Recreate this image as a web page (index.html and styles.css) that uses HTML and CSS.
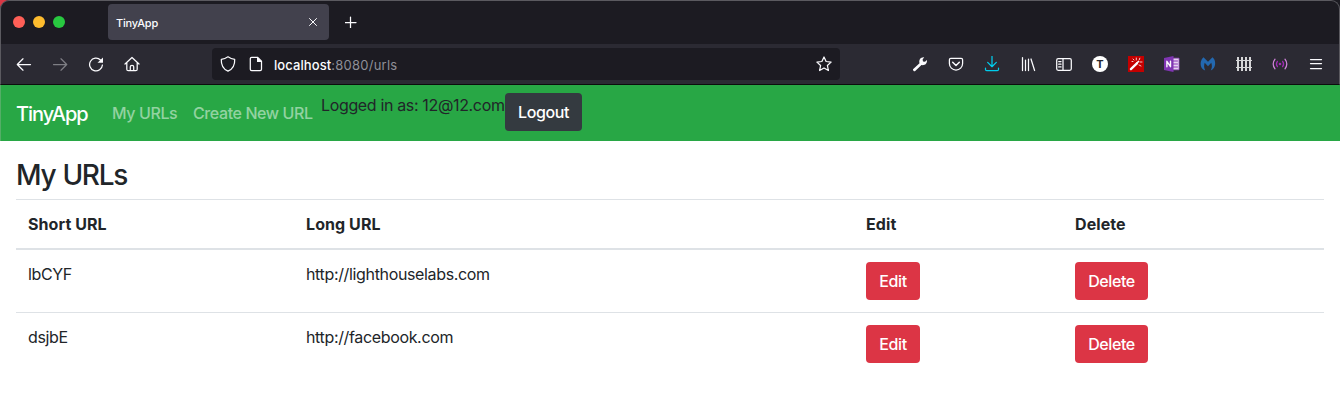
FILE: index.html
```html
<!DOCTYPE html>
<html lang="en">
<head>
<meta charset="utf-8">
<title>TinyApp</title>
<link rel="stylesheet" href="styles.css">
</head>
<body>
<div class="browser">
  <div class="tabstrip">
    <div class="lights"><i class="close"></i><i class="min"></i><i class="max"></i></div>
    <div class="tab"><span class="tab-title">TinyApp</span>
      <svg width="8" height="8" viewBox="0 0 8 8"><path d="M.5.5l7 7M7.5.5l-7 7"/></svg>
    </div>
    <svg class="newtab" width="12" height="12" viewBox="0 0 12 12"><path d="M5.500 1v11M0 6.500h11"/></svg>
  </div>
  <div class="toolbar">
    <div class="navicons">
      <svg viewBox="0 0 16 16"><path d="M14.500 8.500H1.500M7 2.800L1.300 8.500 7 14.200"/></svg>
      <svg class="dim" viewBox="0 0 16 16"><path d="M1.500 8.500h13M9 2.800l5.700 5.700L9 14.200"/></svg>
      <svg viewBox="0 0 16 16"><path d="M12.500 4A6.400 6.400 0 1 0 14.400 9"/><path class="fill" d="M15 1.500v5.300H9.500z"/></svg>
      <svg viewBox="0 0 16 16"><path d="M1 8l7-6.500L15 8M2.800 6.600v6.600q0 1.500 1.500 1.500h7.400q1.500 0 1.500-1.500V6.600M6.300 14.500v-3.800q0-1.300 1.700-1.300t1.700 1.300v3.800"/></svg>
    </div>
    <div class="urlbar">
      <svg viewBox="0 0 16 16"><path d="M8 .8Q5 3 1.300 3.400C1 9.300 3.500 13.300 8 15.200 12.500 13.300 15 9.300 14.700 3.400Q11 3 8 .8z"/></svg>
      <svg class="page" viewBox="0 0 16 16"><path d="M3.700 1.300h5.800l4 4v8q0 1.400-1.400 1.400H3.700q-1.400 0-1.400-1.400V2.700q0-1.400 1.400-1.400z"/><path class="fill" d="M9 1l5 5H9z"/></svg>
      <span class="address"><b>localhost</b>:8080/urls</span>
      <svg class="star" viewBox="0 0 16 16"><path d="M8 1l2.100 4.500 5 .6-3.700 3.400 1 5L8 12l-4.400 2.500 1-5L.9 6.100l5-.6z"/></svg>
    </div>
    <div class="extensions">
      <svg viewBox="0 0 16 16"><path class="fill" d="M1 13.300L7.500 7.300C6.600 4 8.500 1 12.200 1.300L10.600 3.500 11 5.500l2 .3L14.900 4C15.500 7.500 12.700 9.800 9.500 9.100L3.200 15q-.8.6-1.600-.1t-.6-1.600z"/></svg>
      <svg viewBox="0 0 16 16"><path d="M2.800 2.300h10.400q1.400 0 1.400 1.400V7.500a6.600 6.600 0 0 1-13.200 0V3.700q0-1.400 1.400-1.400z"/><path d="M4.700 6.300L8 9.500l3.300-3.200" stroke-width="1.500"/></svg>
      <svg class="download" viewBox="0 0 16 16"><path d="M8 .3v10.200M3.700 6.400L8 10.700l4.300-4.300M1.500 12v1.500q0 1.200 1.200 1.200h10.600q1.200 0 1.200-1.200V12"/></svg>
      <svg viewBox="0 0 16 16"><path d="M2.500 1.500v13M5.500 4v10.500M8.500 3v11.500M11 3l3.600 11.500"/></svg>
      <svg viewBox="0 0 16 16"><rect x=".7" y="2.700" width="14.600" height="11.600" rx="1.500"/><path d="M7 2.700v11.600M2.700 5.500h2.300M2.700 8.200h2.300M2.700 10.900h2.300"/></svg>
      <span class="ext-t">T</span>
      <svg viewBox="0 0 16 16"><path fill="#c40000" stroke="none" d="M0 0h16v16H0z"/><path d="M2.900 13.100L8.900 7.300" stroke-width="2.300"/><path d="M9 7l1.500-1.500" stroke-width="1.700"/><path d="M5 3l1 1M8.300 2v2M11.800 2.200l-.5 1.500M12 6h2M11 9l2 1M4 5.500h1" stroke-width=".8"/></svg>
      <svg viewBox="0 0 16 16"><path fill="#e5d2f0" stroke="#9a4fc4" stroke-width=".8" d="M8 2.200h7v11.600H8z"/><path stroke="#8a35b8" stroke-width="1" d="M9 5h4.500M9 8h4.500M9 11h4.500"/><path fill="#7f35b2" stroke="none" d="M0 2L9.500 0v16L0 14z"/><path d="M2.900 10.800V5.300l3.600 5.400V5.200" stroke-width="1.400"/></svg>
      <svg viewBox="0 0 16 16"><path fill="#2368b0" stroke="none" d="M3.500 1.300L8 5.800l4.500-4.500C15.500 3.500 16 8.800 13.800 12q-1.200 1.800-3 2.500Q12.700 11 11.300 6.800L8 10.300 4.700 6.800Q3.300 11 5.200 14.500-.5 12.500.9 5.500 1.600 2.700 3.500 1.300z"/></svg>
      <svg class="fence" viewBox="0 0 16 16"><path d="M2 1v14M6 1v14M10 1v14M14 1v14" stroke-width="2"/><path d="M0 4.500h16M0 11.500h16" stroke-width="1.200"/></svg>
      <svg class="signal" viewBox="0 0 16 16"><circle cx="8" cy="8" r="1.300" fill="#a12cb5" stroke="none"/><path stroke="#a12cb5" d="M5.400 5.300q-2 2.700 0 5.400M10.600 5.300q2 2.700 0 5.400"/><path stroke="#cf83d9" d="M3 3.200q-3.600 4.800 0 9.600M13 3.200q3.600 4.800 0 9.600"/></svg>
      <svg class="menu" viewBox="0 0 16 16"><path d="M2.500 3.500h11M2.500 7.500h11M2.500 12.500h11"/></svg>
    </div>
  </div>
</div>
<nav class="navbar">
  <a class="brand">TinyApp</a>
  <a class="nav-link my">My URLs</a>
  <a class="nav-link create">Create New URL</a>
  <div class="session"><span class="login">Logged in as: 12@12.com</span><button class="btn dark">Logout</button></div>
</nav>
<main>
  <h3>My URLs</h3>
  <table>
    <colgroup><col class="c1"><col class="c2"><col class="c3"><col class="c4"></colgroup>
    <thead><tr><th>Short URL</th><th>Long URL</th><th>Edit</th><th>Delete</th></tr></thead>
    <tbody>
      <tr><td>lbCYF</td><td>http://lighthouselabs.com</td><td><button class="btn edit">Edit</button></td><td><button class="btn delete">Delete</button></td></tr>
      <tr><td>dsjbE</td><td>http://facebook.com</td><td><button class="btn edit">Edit</button></td><td><button class="btn delete">Delete</button></td></tr>
    </tbody>
  </table>
</main>
</body>
</html>
```

FILE: styles.css
```css
* { box-sizing: border-box; }
body { margin: 0; height: 416px; overflow: hidden; background: #fff; color: #212529; font: 16px/24px Inter, "Liberation Sans", sans-serif; letter-spacing: -.35px; }
svg { display: block; flex: none; fill: none; stroke: #fbfbfe; stroke-width: 1.25; stroke-linecap: round; stroke-linejoin: round; }
.fill { fill: #fbfbfe; stroke: none; }
.browser { height: 85px; background: linear-gradient(135deg, #d93745 4px, #1c1b22 8px); }
.tabstrip { height: 44px; display: flex; align-items: center; padding-left: 12px; padding-bottom: 1px; background: #1c1b22; border: 1px solid #5b5a60; border-bottom: 0; border-radius: 9px 9px 0 0; }
.lights { display: flex; gap: 8px; width: 95px; }
.lights i { width: 12px; height: 12px; border-radius: 50%; }
.close { background: #ff5f57; }
.min { background: #febc2e; }
.max { background: #28c840; }
.tab { width: 221px; height: 36px; display: flex; align-items: center; justify-content: space-between; padding: 0 12px 0 8px; border-radius: 4px; background: #42414d; color: #fbfbfe; }
.tab svg { stroke-width: 1; }
.tab-title { font-size: 11px; font-weight: 500; letter-spacing: -.2px; padding-top: 2px; }
.newtab { margin-left: 16px; }
.toolbar { height: 41px; display: flex; align-items: center; padding: 0 0 0 15px; background: #2b2a33; border: 1px solid #5b5a60; border-top: 0; border-bottom-color: #0c0c0d; }
.navicons { display: flex; flex: none; gap: 20px; width: 196px; }
.navicons svg, .urlbar svg, .extensions svg { width: 16px; height: 16px; }
.dim { opacity: .4; }
.urlbar { width: 628px; flex: none; height: 32px; display: flex; align-items: center; padding: 0 8px; border-radius: 4px; background: #1c1b22; }
.page { margin-left: 12px; }
.address { margin-left: 10px; color: #8f8f97; font-size: 13px; letter-spacing: .25px; padding-top: 2px; }
.address b { color: #fbfbfe; font-weight: 500; letter-spacing: .08px; }
.star { margin-left: auto; }
.extensions { display: flex; flex: none; align-items: center; gap: 20px; margin-left: 72px; }
.download { stroke: #00ccec; }
.fence { stroke: #d5d5d7; stroke-linecap: butt; }
.ext-t { width: 16px; height: 16px; border-radius: 50%; background: #fff; color: #25242c; font: 700 11px/16px Inter, sans-serif; text-align: center; letter-spacing: 0; }
.navbar { height: 56px; display: flex; align-items: center; padding: 8px 16px; background: #28a745; border-left: 1px solid #54ae67; padding-left: 15px; }
.brand { width: 96px; color: #fff; font-size: 20px; line-height: 30px; letter-spacing: -1.05px; font-weight: 500; padding-top: 1px; }
.nav-link { color: rgba(255,255,255,.5); white-space: nowrap; font-weight: 500; letter-spacing: -.4px; }
.my { width: 81px; }
.create { width: 128px; }
.session { display: flex; align-self: flex-start; align-items: flex-start; height: 38px; }
.login { width: 184px; white-space: nowrap; }
.btn { display: block; height: 38px; padding: 0; border: 0; border-radius: 4px; background: #dc3545; color: #fff; font: inherit; font-weight: 500; letter-spacing: -.4px; }
.dark { width: 77px; background: #343a40; }
.edit { width: 54px; }
.delete { width: 73px; }
main { padding: 17px 16px 0; }
h3 { margin: 0 0 7px; font-size: 28px; line-height: 34px; font-weight: 500; letter-spacing: -1.3px; word-spacing: 1px; }
table { width: 1308px; table-layout: fixed; border-collapse: separate; border-spacing: 0; }
.c1 { width: 278px; }
.c2 { width: 560px; }
.c3 { width: 209px; }
.c4 { width: 261px; }
th { padding: 12px; text-align: left; font-weight: 700; letter-spacing: .08px; border-top: 1px solid #dee2e6; border-bottom: 2px solid #dee2e6; }
td { padding: 12px; vertical-align: top; }
tr + tr td { border-top: 1px solid #dee2e6; }
```
